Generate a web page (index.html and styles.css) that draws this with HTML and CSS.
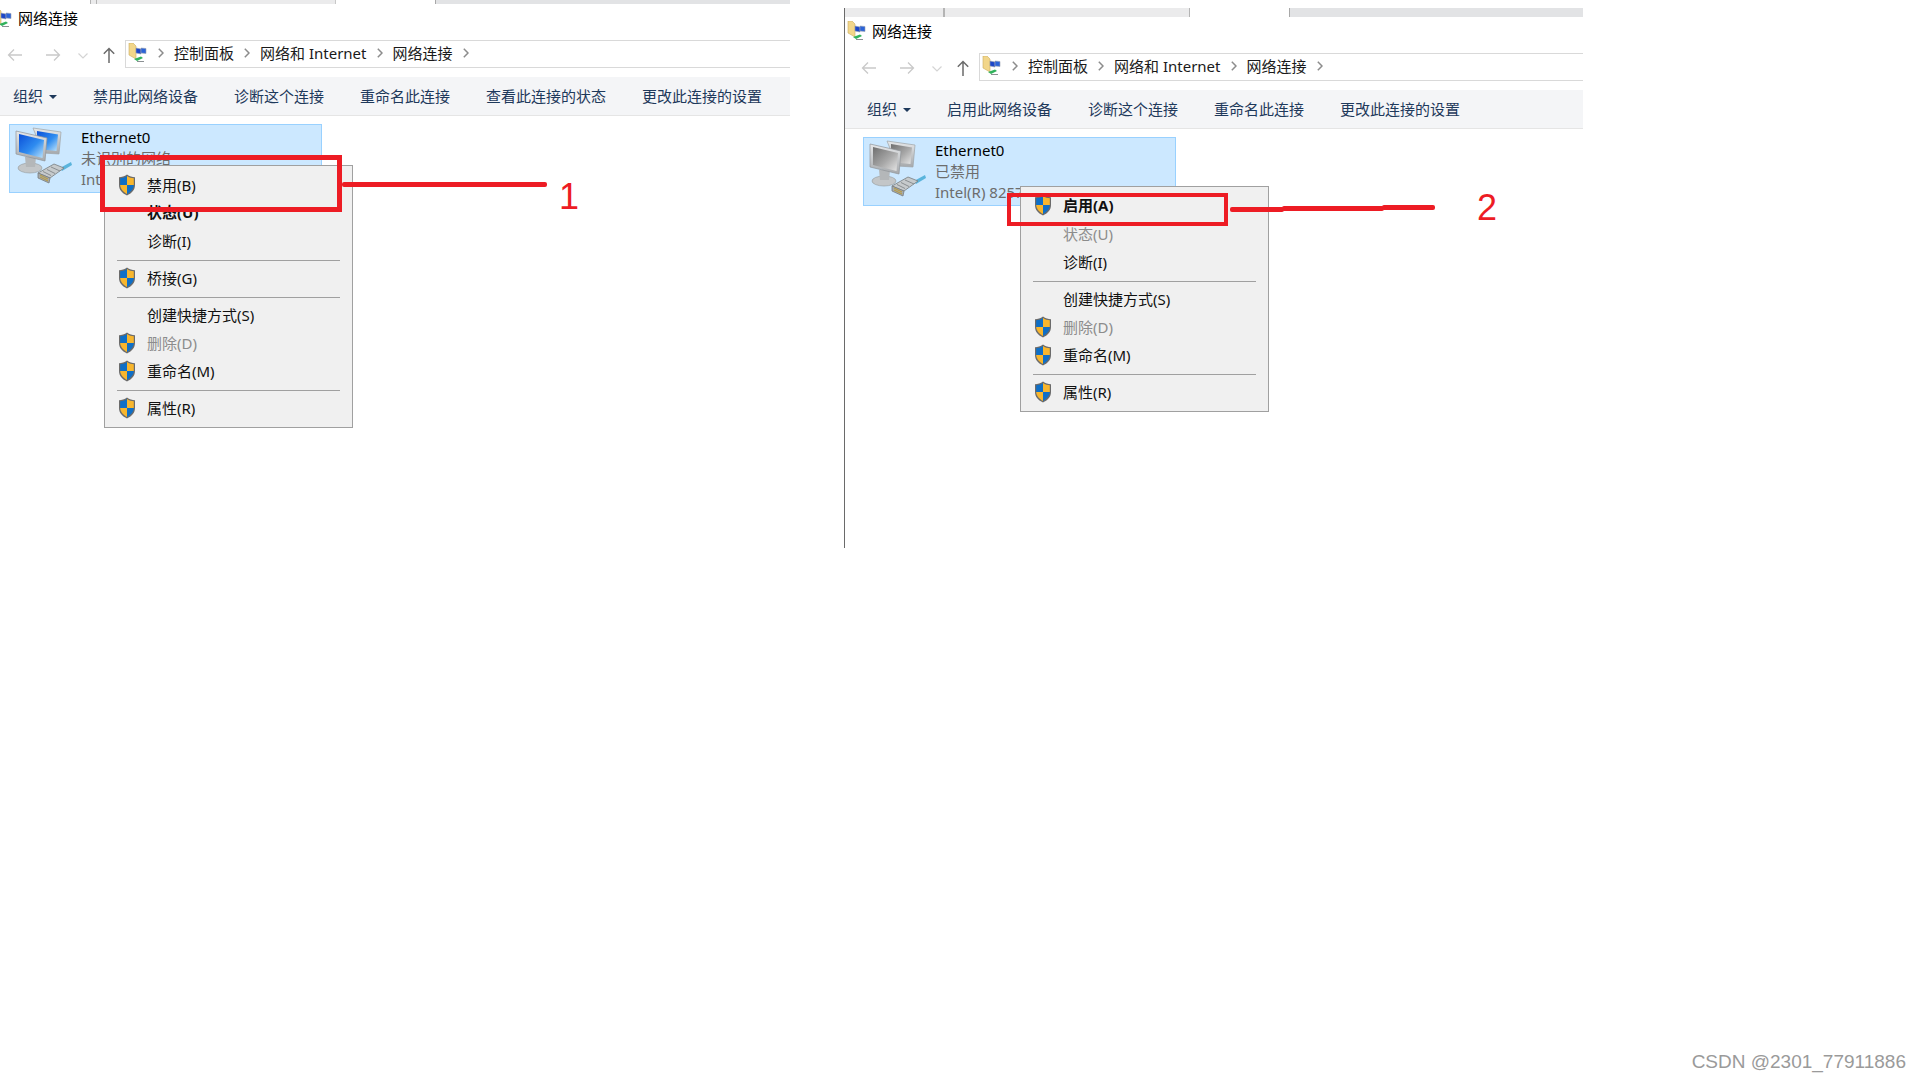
FILE: index.html
```html
<!DOCTYPE html>
<html lang="zh-CN">
<head>
<meta charset="utf-8">
<title>网络连接</title>
<link rel="stylesheet" href="styles.css">
</head>
<body>
<svg class="defs" width="0" height="0" aria-hidden="true">
  <defs>
    <linearGradient id="blueScreen" x1="0" y1="0" x2="1" y2="1">
      <stop offset="0" stop-color="#0a4fd8"/><stop offset=".55" stop-color="#2f8cf0"/><stop offset="1" stop-color="#bfe4fb"/>
    </linearGradient>
    <linearGradient id="greyScreen" x1="0" y1="0" x2="1" y2="1">
      <stop offset="0" stop-color="#6f6f6f"/><stop offset=".55" stop-color="#a8a8a8"/><stop offset="1" stop-color="#e6e6e6"/>
    </linearGradient>
    <linearGradient id="frame" x1="0" y1="0" x2="0" y2="1">
      <stop offset="0" stop-color="#e6e8ea"/><stop offset="1" stop-color="#a6a9ac"/>
    </linearGradient>
    <symbol id="shield" viewBox="0 0 18 22">
      <path d="M9 .6C6.600 2.600 3.600 3.300 1 3.300V11c0 5 3.400 8.500 8 10.400 4.600-1.900 8-5.400 8-10.400V3.300C14.400 3.300 11.400 2.600 9 .6Z" fill="#6b6b6b"/>
      <path d="M9 2C6.900 3.500 4.400 4.200 2.200 4.300V11H9Z" fill="#0f6fc6"/>
      <path d="M9 2c2.100 1.500 4.600 2.200 6.800 2.300V11H9Z" fill="#f8b62d"/>
      <path d="M2.200 11c.2 4 3 7.100 6.800 9V11Z" fill="#f8b62d"/>
      <path d="M15.800 11c-.2 4-3 7.100-6.800 9V11Z" fill="#0f6fc6"/>
    </symbol>
    <symbol id="plug" viewBox="0 0 60 62">
      <path d="M47 45 58 39 59 42 49 48Z" fill="#5ab4dc"/>
      <path d="M25 50 41 41 51 45 37 55Z" fill="#c6cacc" stroke="#777c7f" stroke-width=".8"/>
      <path d="M25 50 37 55 36 60 25 55Z" fill="#a7abad" stroke="#777c7f" stroke-width=".8"/>
      <path d="M27 52 35 56M27 54 35 58" stroke="#b59c4c" stroke-width="1.200"/>
      <path d="M30 48.500 38 52.500M34 46.500 42 50.500M38 44 47 48" stroke="#82878a" stroke-width=".9"/>
    </symbol>
    <symbol id="net-blue" viewBox="0 0 60 62">
      <path d="M20 5 48 9 46 31 30 30Z" fill="url(#frame)" stroke="#9ea3a6" stroke-width=".7"/>
      <path d="M24 8 45 11.500 43.500 28 24 26Z" fill="url(#blueScreen)"/>
      <ellipse cx="17" cy="45" rx="12" ry="5" fill="#c3c6c8" stroke="#94989a" stroke-width=".6"/>
      <path d="M12 34H23L22 44H13Z" fill="#b4b7b9"/>
      <path d="M3 8 34 15 32 38 3 31Z" fill="url(#frame)" stroke="#8f9498" stroke-width=".7"/>
      <path d="M6 11 31 17 29.500 35 6 29Z" fill="url(#blueScreen)"/>
      <use href="#plug"/>
    </symbol>
    <symbol id="net-grey" viewBox="0 0 60 62">
      <path d="M20 5 48 9 46 31 30 30Z" fill="url(#frame)" stroke="#9ea3a6" stroke-width=".7"/>
      <path d="M24 8 45 11.500 43.500 28 24 26Z" fill="url(#greyScreen)"/>
      <ellipse cx="17" cy="45" rx="12" ry="5" fill="#c3c6c8" stroke="#94989a" stroke-width=".6"/>
      <path d="M12 34H23L22 44H13Z" fill="#b4b7b9"/>
      <path d="M3 8 34 15 32 38 3 31Z" fill="url(#frame)" stroke="#8f9498" stroke-width=".7"/>
      <path d="M6 11 31 17 29.500 35 6 29Z" fill="url(#greyScreen)"/>
      <use href="#plug"/>
    </symbol>
    <symbol id="folder" viewBox="0 0 20 20">
      <path d="M1 0H5L8 3V16L1 12Z" fill="#f2d68a" stroke="#c9ad5f" stroke-width=".6"/>
      <path d="M8 5 13 6V11L8 10Z" fill="#1c46c8" stroke="#9aa3b0" stroke-width=".6"/>
      <path d="M13 5 18 5.500V10.500L13 10Z" fill="#2b63d8" stroke="#9aa3b0" stroke-width=".6"/>
      <path d="M6 16 13 13.500 15 15 9 18Z" fill="#31b25c"/>
      <path d="M9 18.500H16" stroke="#8b9093" stroke-width="1"/>
    </symbol>
    <symbol id="back" viewBox="0 0 15 14">
      <path d="M15 7H1.500M7 1.500 1.500 7 7 12.500" fill="none" stroke="currentColor" stroke-width="1.300"/>
    </symbol>
    <symbol id="forward" viewBox="0 0 15 14">
      <path d="M0 7H13.500M8 1.500 13.500 7 8 12.500" fill="none" stroke="currentColor" stroke-width="1.300"/>
    </symbol>
    <symbol id="down" viewBox="0 0 10 6">
      <path d="M.5 .5 5 5 9.500 .5" fill="none" stroke="currentColor" stroke-width="1.200"/>
    </symbol>
    <symbol id="up" viewBox="0 0 12 16">
      <path d="M6 16V1.500M.8 6.800 6 1.500 11.200 6.800" fill="none" stroke="currentColor" stroke-width="1.500"/>
    </symbol>
    <symbol id="chev" viewBox="0 0 6 10">
      <path d="M.8 .8 5 5 .8 9.200" fill="none" stroke="currentColor" stroke-width="1.500"/>
    </symbol>
  </defs>
</svg>

<section class="window window-one">
  <div class="strip">
    <span class="seg seg-blank-a"></span>
    <span class="seg seg-tab-a"></span>
    <span class="seg seg-tab-b"></span>
    <span class="seg seg-blank-b"></span>
    <span class="seg seg-rest"></span>
  </div>
  <div class="title"><svg class="title-icon"><use href="#folder"/></svg><span>网络连接</span></div>
  <div class="nav">
    <svg class="nav-back"><use href="#back"/></svg>
    <svg class="nav-forward"><use href="#forward"/></svg>
    <svg class="nav-down"><use href="#down"/></svg>
    <svg class="nav-up"><use href="#up"/></svg>
    <div class="address">
      <svg class="address-icon"><use href="#folder"/></svg>
      <svg class="chev"><use href="#chev"/></svg><span>控制面板</span>
      <svg class="chev"><use href="#chev"/></svg><span>网络和 Internet</span>
      <svg class="chev"><use href="#chev"/></svg><span>网络连接</span>
      <svg class="chev"><use href="#chev"/></svg>
    </div>
  </div>
  <div class="toolbar">
    <span class="organize">组织<i class="caret"></i></span>
    <span>禁用此网络设备</span>
    <span>诊断这个连接</span>
    <span>重命名此连接</span>
    <span>查看此连接的状态</span>
    <span>更改此连接的设置</span>
  </div>
  <div class="content">
    <div class="item">
      <svg class="item-icon"><use href="#net-blue"/></svg>
      <div class="item-text">
        <div class="item-name">Ethernet0</div>
        <div>未识别的网络</div>
        <div>Intel(R) 82574L Gigabit Network Connection</div>
      </div>
    </div>
  </div>
  <div class="menu menu-one">
    <div class="row"><svg class="shield"><use href="#shield"/></svg>禁用(B)</div>
    <div class="row bold">状态(U)</div>
    <div class="row">诊断(I)</div>
    <div class="sep"></div>
    <div class="row"><svg class="shield"><use href="#shield"/></svg>桥接(G)</div>
    <div class="sep"></div>
    <div class="row">创建快捷方式(S)</div>
    <div class="row off"><svg class="shield"><use href="#shield"/></svg>删除(D)</div>
    <div class="row"><svg class="shield"><use href="#shield"/></svg>重命名(M)</div>
    <div class="sep"></div>
    <div class="row"><svg class="shield"><use href="#shield"/></svg>属性(R)</div>
  </div>
</section>

<section class="window window-two">
  <div class="strip">
    <span class="seg seg-tab-c"></span>
    <span class="seg seg-tab-d"></span>
    <span class="seg seg-blank-b"></span>
    <span class="seg seg-rest"></span>
  </div>
  <div class="title"><svg class="title-icon"><use href="#folder"/></svg><span>网络连接</span></div>
  <div class="nav">
    <svg class="nav-back"><use href="#back"/></svg>
    <svg class="nav-forward"><use href="#forward"/></svg>
    <svg class="nav-down"><use href="#down"/></svg>
    <svg class="nav-up"><use href="#up"/></svg>
    <div class="address">
      <svg class="address-icon"><use href="#folder"/></svg>
      <svg class="chev"><use href="#chev"/></svg><span>控制面板</span>
      <svg class="chev"><use href="#chev"/></svg><span>网络和 Internet</span>
      <svg class="chev"><use href="#chev"/></svg><span>网络连接</span>
      <svg class="chev"><use href="#chev"/></svg>
    </div>
  </div>
  <div class="toolbar">
    <span class="organize">组织<i class="caret"></i></span>
    <span>启用此网络设备</span>
    <span>诊断这个连接</span>
    <span>重命名此连接</span>
    <span>更改此连接的设置</span>
  </div>
  <div class="content">
    <div class="item">
      <svg class="item-icon"><use href="#net-grey"/></svg>
      <div class="item-text">
        <div class="item-name">Ethernet0</div>
        <div>已禁用</div>
        <div>Intel(R) 82574L Gigabit Network Connection</div>
      </div>
    </div>
  </div>
  <div class="menu menu-two">
    <div class="row bold"><svg class="shield"><use href="#shield"/></svg>启用(A)</div>
    <div class="row off">状态(U)</div>
    <div class="row">诊断(I)</div>
    <div class="sep"></div>
    <div class="row">创建快捷方式(S)</div>
    <div class="row off"><svg class="shield"><use href="#shield"/></svg>删除(D)</div>
    <div class="row"><svg class="shield"><use href="#shield"/></svg>重命名(M)</div>
    <div class="sep"></div>
    <div class="row"><svg class="shield"><use href="#shield"/></svg>属性(R)</div>
  </div>
</section>

<div class="mark box-one"></div>
<div class="mark line line-one"></div>
<div class="mark digit digit-one">1</div>
<div class="mark box-two"></div>
<div class="mark line line-two-a"></div>
<div class="mark line line-two-b"></div>
<div class="mark line line-two-c"></div>
<div class="mark digit digit-two">2</div>

<div class="watermark">CSDN @2301_77911886</div>
</body>
</html>
```

FILE: styles.css
```css
* { box-sizing: border-box; }

html, body {
  margin: 0;
  height: 100%;
}

body {
  position: relative;
  overflow: hidden;
  background: #fff;
  color: #000;
  font-family: "Noto Sans", "Noto Sans CJK SC", sans-serif;
  font-size: 15px;
  line-height: 20px;
}

.defs { position: absolute; }

.window {
  position: absolute;
  display: flex;
  flex-direction: column;
  background: #fff;
}

.window-one { left: -9px; top: -5px; width: 799px; }
.window-two { left: 844px; top: 8px; width: 739px; height: 540px; border-left: 1px solid #6a6a6a; }

.strip { display: flex; height: 9px; }
.seg { display: block; height: 100%; }
.seg-blank-a { width: 99px; }
.seg-tab-a { width: 7px; background: #ebebec; border-left: 1px solid #b4b4b4; border-right: 1px solid #b4b4b4; }
.seg-tab-b { width: 239px; background: #ebebec; border-right: 1px solid #c8c8c8; }
.seg-tab-c { width: 99px; background: #ebebec; border-right: 1px solid #b4b4b4; }
.seg-tab-d { width: 246px; background: #ebebec; border-left: 1px solid #b4b4b4; border-right: 1px solid #b4b4b4; }
.seg-blank-b { width: 99px; }
.seg-rest { flex: 1; background: #e2e3e5; border-left: 1px solid #a8a8a8; }

.title {
  display: flex;
  align-items: center;
  height: 36px;
  padding: 0 0 8px 2px;
  gap: 5px;
}
.title-icon { width: 20px; height: 20px; }

.nav {
  display: flex;
  align-items: center;
  height: 28px;
  padding-left: 16px;
  color: #c9c9c9;
}
.nav-back { width: 15px; height: 14px; margin-top: 2px; }
.nav-forward { width: 15px; height: 14px; margin: 2px 0 0 24px; }
.nav-down { width: 10px; height: 6px; margin: 3px 0 0 17px; color: #d4d4d4; }
.nav-up { width: 12px; height: 16px; margin: 2px 0 0 15px; color: #6b6b6b; }

.address {
  flex: 1;
  display: flex;
  align-items: center;
  gap: 10px;
  height: 28px;
  margin-left: 10px;
  padding: 0 0 2px 2px;
  border: 1px solid #d9d9d9;
  border-right: 0;
  color: #1a1a1a;
}
.address-icon { width: 20px; height: 20px; }
.chev { width: 6px; height: 10px; color: #8c8c8c; }

.toolbar {
  display: flex;
  align-items: center;
  gap: 36px;
  height: 39px;
  margin-top: 9px;
  padding-left: 22px;
  background: #f4f5f7;
  border-bottom: 1px solid #e5e5e5;
  color: #1e395b;
}
.organize { display: flex; align-items: center; gap: 6px; }
.caret {
  width: 0;
  height: 0;
  margin-top: 2px;
  border: 4px solid transparent;
  border-top-color: #1e395b;
  border-bottom: 0;
}

.content { padding: 8px 0 0 18px; }

.item {
  display: flex;
  width: 313px;
  height: 69px;
  padding-left: 3px;
  gap: 8px;
  overflow: hidden;
  background: #cce8ff;
  border: 1px solid #99d1ff;
}
.item-icon { flex: none; width: 60px; height: 62px; margin-top: -2px; }
.item-text {
  padding-top: 2px;
  color: #6d6d6d;
  line-height: 21px;
  white-space: nowrap;
}
.item-name { color: #000; }

.menu {
  position: absolute;
  width: 249px;
  padding: 6px 0 4px;
  background: #f0f0f0;
  border: 1px solid #a0a0a0;
  color: #111;
}
.menu-one { left: 113px; top: 170px; }
.menu-two { left: 175px; top: 178px; }

.row {
  position: relative;
  display: flex;
  align-items: center;
  height: 28px;
  padding: 0 0 2px 42px;
}
.bold { font-weight: 700; padding-bottom: 5px; }
.off { color: #8c8c8c; }
.shield {
  position: absolute;
  left: 13px;
  top: 2px;
  width: 18px;
  height: 22px;
}
.bold .shield { top: 1px; }
.sep {
  height: 1px;
  margin: 4px 12px 4px 12px;
  background: #a0a0a0;
}

.mark { position: absolute; }
.box-one { left: 100px; top: 155px; width: 242px; height: 57px; border: 5px solid #ed1c24; }
.box-two { left: 1007px; top: 193px; width: 221px; height: 33px; border: 4px solid #ed1c24; }
.line { background: #ed1c24; border-radius: 2px; }
.line-one { left: 342px; top: 182px; width: 205px; height: 5px; }
.line-two-a { left: 1230px; top: 207px; width: 54px; height: 5px; }
.line-two-b { left: 1282px; top: 206px; width: 102px; height: 5px; }
.line-two-c { left: 1382px; top: 205px; width: 53px; height: 5px; }
.digit {
  color: #ed1c24;
  font-family: "Liberation Sans", sans-serif;
  font-size: 36px;
  line-height: 36px;
}
.digit-one { left: 559px; top: 179px; }
.digit-two { left: 1477px; top: 190px; }

.watermark {
  position: absolute;
  right: 14px;
  bottom: 8px;
  color: #9a9a9a;
  font-family: "Liberation Sans", sans-serif;
  font-size: 19px;
}
```
